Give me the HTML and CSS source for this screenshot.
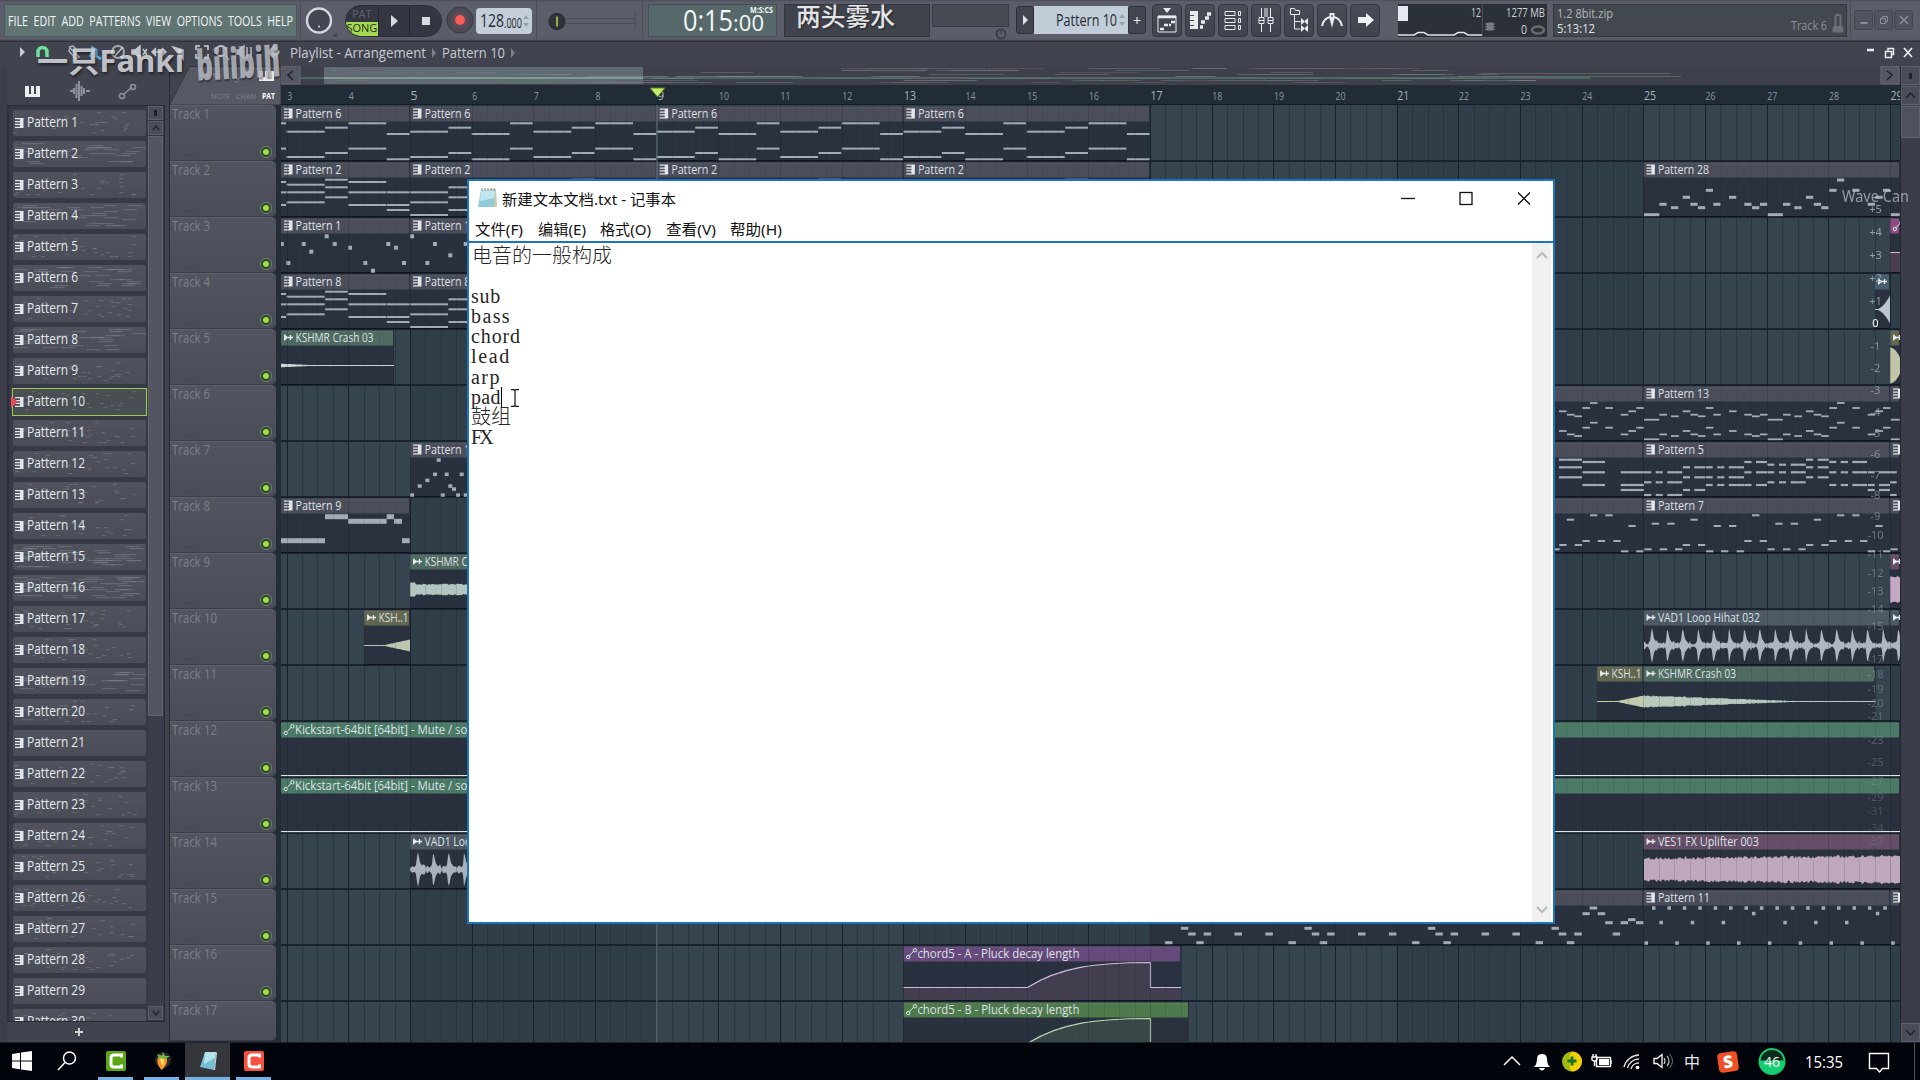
FILE: index.html
```html
<!DOCTYPE html>
<html lang="zh-CN">
<head>
<meta charset="utf-8">
<title>Playlist - Arrangement</title>
<link rel="stylesheet" href="styles.css">
</head>
<body>
<header class="toolbar">
  <div class="menu-panel"><span data-w="285">FILE&nbsp; EDIT&nbsp; ADD&nbsp; PATTERNS&nbsp; VIEW&nbsp; OPTIONS&nbsp; TOOLS&nbsp; HELP</span></div>
  <div class="cell knob-cell"><svg width="38" height="40"><circle cx="18" cy="19.500" r="12" fill="#434651" stroke="#d5d8df" stroke-width="2.4"/><circle cx="18" cy="25.500" r="1" fill="#ddd"/><path d="M36 31v5h-5z" fill="#454853"/></svg></div>
  <div class="transport">
    <div class="mode"><span class="pat">PAT</span><span class="song">SONG</span></div>
    <div class="tbtn"><svg width="12" height="12"><path d="M3 0l7 6-7 6z" fill="#d9dbe0"/></svg></div>
    <div class="tbtn"><svg width="8" height="8"><rect width="8" height="8" fill="#d9dbe0"/></svg></div>
  </div>
  <svg class="record" width="28" height="32"><circle cx="14" cy="16" r="13" fill="#4a4a55" stroke="#363841"/><circle cx="14" cy="16" r="9" fill="#5d4b55"/><circle cx="14" cy="16" r="5" fill="#fa5c56"/></svg>
  <div class="tempo"><span class="t-int" data-w="24">128</span><span class="t-dec" data-w="18">.000</span><svg width="7" height="14"><path d="M0 5l3-4 3 4zM0 9l3 4 3-4z" fill="#94a1ad"/></svg></div>
  <div class="cell slider"><svg width="106" height="40"><path d="M28 17.500h70v5H28M98 12v16" fill="none" stroke="#4c4f5a"/><circle cx="20" cy="20.500" r="8" fill="#30333b" stroke="#24262d"/><path d="M20 15.500v10" stroke="#b9d94f" stroke-width="1.500"/></svg></div>
  <div class="time-panel"><span class="t-big" data-w="50">0:15</span><span class="t-small" data-w="31">:00</span><em data-w="23">M:S:CS</em></div>
  <div class="news-panel"></div>
  <div class="side-panel"><div class="mini-panel"></div><svg width="12" height="12"><circle cx="6" cy="6" r="4.500" fill="none" stroke="#3c3f4a" stroke-width="2"/><path d="M6 6V2" stroke="#3c3f4a"/></svg></div>
  <div class="picker"><b><svg width="8" height="10"><path d="M2 0l5 5-5 5z" fill="#e0e2e6"/></svg></b><div class="pname"><span data-w="61">Pattern 10</span><svg width="6" height="14"><path d="M0 5l3-4 3 4zM0 9l3 4 3-4z" fill="#94a1ad"/></svg></div><b>+</b></div>
  <nav class="tools">
    <i><svg viewBox="0 0 30 32"><path d="M11 4h8l-4 5z" fill="#e8eaee"/><path d="M6 12h18v16H6z" fill="none" stroke="#e8eaee"/><path d="M6 13h18M8 25h4M12 21h4M17 21h2M19 18h4" stroke="#e8eaee" stroke-width="2.500"/></svg></i>
    <i><svg viewBox="0 0 30 32"><path d="M5 7h8v18H5v-3h4v-1H5v-4h4v-1H5v-4h4v-1H5z" fill="#e8eaee"/><path d="M15 23h3M16 18h4M20 14h4M22 10h4" stroke="#e8eaee" stroke-width="3.500"/></svg></i>
    <i><svg viewBox="0 0 30 32"><path d="M7 7.500h10v4H7zM7 14.500h10v4H7zM7 21.500h10v4H7zM20.500 7.500h2v4h-2zM20.500 14.500h2v4h-2zM20.500 21.500h2v4h-2z" fill="none" stroke="#e8eaee"/></svg></i>
    <i><svg viewBox="0 0 30 32"><path d="M10.500 4v9M14 4v9M10.500 20v8M19.500 4v9M16 4v9M19.500 20v8M8 13.500h5v6H8zM17 13.500h5v6h-5z" fill="none" stroke="#e8eaee"/><path d="M8 16.500h5M17 16.500h5" stroke="#e8eaee"/></svg></i>
    <i><svg viewBox="0 0 30 32"><path d="M6.500 10.500v-6h4l1 2h4v4zM10.500 11v14h6M10.500 17.500h6" fill="none" stroke="#e8eaee"/><path d="M17 14v7l4-3.500zM24 14v7l-4-3.500zM17 21v7l4-3.500zM24 21v7l-4-3.500z" fill="#e8eaee"/></svg></i>
    <i><svg viewBox="0 0 30 32"><path d="M5 22c1-5 4-8 8-9M25 22c-1-5-4-8-8-9" fill="none" stroke="#e8eaee" stroke-width="2"/><path d="M12.500 9h5v5l-2.500 10-2.500-10z" fill="#e8eaee"/><circle cx="15" cy="12" r="1" fill="#555965"/></svg></i>
    <i><svg viewBox="0 0 30 32"><path d="M8 13h8V9l8 7-8 7v-4H8z" fill="#f1f2f4"/></svg></i>
  </nav>
  <div class="cpu"><div class="cpu-l"><span data-w="10">12</span><svg width="85" height="34"><rect width="10" height="15" y="2" fill="#e5e9f0"/><path d="M0 31h16l4-2.500h6l4 2.500h26l4-2.500h6l4 2.500h14" fill="none" stroke="#dfe3e6" stroke-width="1.500"/></svg></div><div class="cpu-r"><span data-w="39">1277 MB</span><span class="zero" data-w="6">0</span><svg width="62" height="18"><path d="M3 2h6v7H3zM1 3h10M1 6h10M1 8.500h10" stroke="#777b82" fill="#777b82"/><ellipse cx="54" cy="9" rx="6" ry="3.500" fill="none" stroke="#666b72" stroke-width="2.500"/></svg></div></div>
  <div class="hint"><div><p data-w="56">1.2 8bit.zip</p><p class="bright" data-w="38">5:13:12</p></div><span class="trk" data-w="36">Track 6</span><svg width="12" height="20"><rect x="3.500" y="1" width="5" height="13" rx="2" fill="none" stroke="#6d7177" stroke-width="2"/><path d="M0 16h12M2 12l-1 6h10l-1-6" fill="#6d7177" stroke="#6d7177"/></svg></div>
  <div class="cell winctl"><i><svg width="10" height="10"><path d="M1.500 8h7" stroke="#8b8e98" stroke-width="2"/></svg></i><i><svg width="10" height="10"><path d="M1.500 3.500h5v5h-5zM3.500 3V1.500h5v5H7" fill="none" stroke="#8b8e98"/></svg></i><i><svg width="10" height="10"><path d="M1 1l8 8M9 1L1 9" stroke="#8b8e98" stroke-width="1.500"/></svg></i></div>
</header>

<main class="playlist">
  <div class="title-row">
    <svg class="title-icons" width="282" height="24"><path d="M20 6l5 5-5 5z" fill="#c9ccd2"/><path d="M38 16v-5a4.500 4.500 0 019 0v5" fill="none" stroke="#6be29c" stroke-width="3.500"/><path d="M70 7l9 9-3 2-7-8zM69 6l4-1 3 3" fill="none" stroke="#aeb3bc" stroke-width="1.500"/><path d="M91 6l5 3v6l5 3M94 8l-4 8" fill="none" stroke="#61a5df" stroke-width="3"/><circle cx="118" cy="11" r="6" fill="none" stroke="#a3a8b1" stroke-width="2"/><path d="M114 16l9-10M132 9h3l5-4v12l-5-4h-3zM143 8l4 6M147 8l-4 6M152 11h13M156 7l-4 4 4 4M162 7l4 4-4 4M173 6l10 3v9z" stroke="#c2c5cc" stroke-width="1.500" fill="#c2c5cc"/><path d="M196 9V5h4M204 5h4v4M208 13v4h-4M200 17h-4v-4" fill="none" stroke="#d1d4da" stroke-width="1.500"/><circle cx="221" cy="10" r="5" fill="none" stroke="#c2c5cc" stroke-width="2"/><path d="M225 14l4 5M236 9h3l5-4v12l-5-4h-3zM247 6v11M251 6v11M268 11l6-6v12zM279 11l-4-5v10z" fill="#b8bcc4" stroke="#b8bcc4" stroke-width="1.500"/></svg>
    <span class="crumb" data-w="136">Playlist - Arrangement</span><svg class="sep" width="16" height="12"><path d="M6 1l4 5-4 5z" fill="#7d808b"/></svg><span class="crumb" data-w="63">Pattern 10</span><svg class="sep" width="16" height="12"><path d="M6 1l4 5-4 5z" fill="#7d808b"/></svg>
    <svg class="title-ctl" width="50" height="20"><path d="M0 7h7" stroke="#e9ebef" stroke-width="2.500"/><path d="M18.500 8.500h6v6h-6zM21 8V5.500h5.500v6H25" fill="none" stroke="#e9ebef" stroke-width="1.500"/><path d="M37 5l8 9M45 5l-8 9" stroke="#e9ebef" stroke-width="1.700"/></svg>
  </div>
  <div class="work">
    <aside class="browser">
      <div class="tabs"><svg width="165" height="39"><path d="M25 20h4v8h2v-8h3v8h2v-8h4v11H25z" fill="#eceef1"/><path d="M70 25h3M74 22v6M76.500 18v14M79 15v20M81.500 20v10M84 22v6M86 25h4" stroke="#8d919b" stroke-width="2"/><path d="M123 29l9-8" stroke="#8d919b" stroke-width="1.500"/><circle cx="122" cy="30" r="2.500" fill="none" stroke="#8d919b" stroke-width="1.500"/><circle cx="133" cy="21" r="2.500" fill="none" stroke="#8d919b" stroke-width="1.500"/></svg></div>
      <div class="listbox"><ul id="patterns"></ul><div class="vscroll"><b class="dot"></b><b><svg width="12" height="12"><path d="M3 8l3-4 3 4" fill="none" stroke="#20232b" stroke-width="1.300"/></svg></b><div class="thumb"></div><div class="gutter"></div><b><svg width="12" height="12"><path d="M3 4l3 4 3-4" fill="none" stroke="#20232b" stroke-width="1.300"/></svg></b></div></div>
      <div class="add"><svg width="10" height="10"><path d="M5 1v8M1 5h8" stroke="#cbd5d4" stroke-width="2"/></svg></div>
    </aside>
    <section class="heads">
      <div class="corner"><svg width="111" height="39"><path d="M.5 37L19 1.500Q20 .5 21 .5H111V39H0z" fill="#565964" stroke="#323640"/><path d="M42 7l4 8 4-8z" fill="#777a85"/><path d="M67 14l9-8" stroke="#858994"/><circle cx="66" cy="14" r="2" fill="none" stroke="#858994"/><circle cx="77" cy="6" r="2" fill="none" stroke="#858994"/><path d="M89 5h4v6h2V5h3v6h2V5h4v10H89z" fill="#eee"/></svg><span class="note" data-w="19">NOTE</span><span class="chan" data-w="20">CHAN</span><span class="patb" data-w="13">PAT</span></div>
      <div id="tracks"></div>
    </section>
    <section class="timeline"><svg id="overview" width="1619" height="20"></svg><svg id="ruler" width="1619" height="19"></svg><svg id="grid" width="1619" height="937"></svg></section>
    <div class="rightbar"><b class="dot"></b><b><svg width="17" height="17"><path d="M4 11l4.500-5 4.500 5" fill="none" stroke="#20232b" stroke-width="1.400"/></svg></b><div class="rthumb"></div><div class="gutter"></div><b class="down"><svg width="17" height="17"><path d="M4 6l4.500 5L13 6" fill="none" stroke="#20232b" stroke-width="1.400"/></svg></b></div>
  </div>
</main>

<footer class="taskbar">
  <div class="tk"><svg width="20" height="20"><path d="M0 3l8-1.200V9.500H0zM9 1.600L20 0v9.500H9zM0 10.500h8v7.700L0 17zM9 10.500h11V20L9 18.400z" fill="#fff"/></svg></div>
  <div class="tk"><svg width="20" height="20"><circle cx="12.500" cy="7" r="6" fill="none" stroke="#fff" stroke-width="1.500"/><path d="M8 11.500L1 19" stroke="#fff" stroke-width="1.500"/></svg></div>
  <div class="tk run"><svg width="20" height="20"><rect width="20" height="20" rx="2" fill="#5aa616"/><path d="M15.500 6.500V4H8Q5 4 5 7v6q0 3 3 3h7.500v-2.500" fill="none" stroke="#fff" stroke-width="3"/></svg></div>
  <div class="tk run"><svg width="20" height="20"><circle cx="11" cy="9" r="8" fill="#272b2b"/><path d="M6 7q2-4 7-2 5 5-2 13-2 2-3-1-4-6-2-10z" fill="#f79827"/><path d="M8 8q1 5 3 7 2-5 0-8z" fill="#ffdc6b"/><path d="M5 3l5 2 1-4 2 4 5 0-5 3-6-1z" fill="#74b84a"/></svg></div>
  <div class="tk run active"><svg width="20" height="20"><path d="M7 1h11l-2 18-14-3z" fill="#76bfd2"/><path d="M7 1h11l-1 6-11 6z" fill="#b2e2ec"/><path d="M18 1l1 1-2 17-1 0z" fill="#d4dfe3"/></svg></div>
  <div class="tk run"><svg width="20" height="20"><rect width="20" height="20" rx="2" fill="#f9513f"/><path d="M15.500 6.500V4H8Q5 4 5 7v6q0 3 3 3h7.500v-2.500" fill="none" stroke="#fff" stroke-width="3"/></svg></div>
  <div class="tray">
    <svg width="30" height="38"><path d="M7 22l8-8 8 8" fill="none" stroke="#fff" stroke-width="1.500"/></svg>
    <svg width="30" height="38"><path d="M7 24q3-3 3-8 0-5 5-5t5 5q0 5 3 8zM12 25h6q-1 2.500-3 2.500T12 25z" fill="#fff"/></svg>
    <svg width="30" height="38"><circle cx="15" cy="18.500" r="10" fill="#a4b811"/><path d="M15 8.500a10 10 0 010 20c-4-5-4-15 0-20z" fill="#f4d000"/><path d="M15 13.500v9M10.500 18h9" stroke="#187424" stroke-width="3"/></svg>
    <svg width="30" height="38"><path d="M9.500 14.500h14v9h-14zM24 17v4M6 11v3M9 11v3M5 14h5v3q-2.500 2-5 0zM7.500 18v5" fill="none" stroke="#fff" stroke-width="1.400"/><path d="M12 16h10v6H12z" fill="#fff"/></svg>
    <svg width="30" height="38"><path d="M7 24A16 16 0 0122 12M10.500 25A12 12 0 0122 16M14 26a8 8 0 018-6" fill="none" stroke="#ddd" stroke-width="1.400"/><circle cx="20.500" cy="24.500" r="1.800" fill="#fff"/></svg>
    <svg width="30" height="38"><path d="M7 15.500h3l5-4v13l-5-4H7z" fill="none" stroke="#fff" stroke-width="1.300"/><path d="M17 15q2 3 0 6M20 13q4 5 0 10" fill="none" stroke="#ccc" stroke-width="1.200"/><path d="M22.500 11q6 7 0 14" fill="none" stroke="#777"/></svg>
    <span class="ime">中</span>
    <span class="sogou">S</span>
    <svg class="mem" width="32" height="38"><circle cx="16" cy="18.500" r="12.500" fill="#0c2a1d" stroke="#16cb6e" stroke-width="2"/><path d="M3 17.500h26a13 13 0 01-26 0z" fill="#16d070"/><text x="8" y="23.500" textLength="16" lengthAdjust="spacingAndGlyphs">46</text></svg>
    <span class="clock"><span data-w="38">15:35</span></span>
    <svg class="action" width="22" height="24"><path d="M1.500 3.500h19v15h-6l-3 3.500-3-3.500h-7z" fill="none" stroke="#fff" stroke-width="1.400"/></svg>
    <span class="edge"></span>
  </div>
</footer>

<section class="notepad">
  <div class="np-title"><svg width="22" height="22"><path d="M4 3l15-1 1 18-18 0z" fill="#d3c9a9"/><path d="M4 3h14l-1 17H1z" fill="#8fcbdc"/><path d="M4 3h14l-.6 8L3 14z" fill="#bfe5ee"/><path d="M5 1v3M8 1v3M11 1v3M14 1v3M17 1v3" stroke="#7d8b8e"/></svg><span data-w="174">新建文本文档.txt - 记事本</span>
    <svg class="np-ctl" width="142" height="36"><path d="M7 18.500h14" stroke="#111" stroke-width="1.300"/><rect x="66" y="12.500" width="12" height="12" fill="none" stroke="#111" stroke-width="1.300"/><path d="M124 12.500l12 12M136 12.500l-12 12" stroke="#111" stroke-width="1.300"/></svg></div>
  <div class="np-menu"><span data-w="48">文件(F)</span><span data-w="48">编辑(E)</span><span data-w="51">格式(O)</span><span data-w="50">查看(V)</span><span data-w="52">帮助(H)</span></div>
  <div class="np-body">
    <div class="np-text"><p>电音的一般构成</p><p>&nbsp;</p><p data-ls="30">sub</p><p data-ls="40">bass</p><p data-ls="50">chord</p><p data-ls="40">lead</p><p data-ls="30">arp</p><p><span class="pad" data-ls="30">pad</span><svg class="ibeam" width="8" height="18"><path d="M0 .7h3l1 1 1-1h3M4 1.500v15M0 17.300h3l1-1 1 1h3" fill="none" stroke="#111" stroke-width="1.200"/></svg></p><p>鼓组</p><p data-ls="20">FX</p></div>
    <div class="np-scroll"><svg width="12" height="8"><path d="M1 7l5-5 5 5" fill="none" stroke="#bbb" stroke-width="2"/></svg><svg width="12" height="8"><path d="M1 1l5 5 5-5" fill="none" stroke="#bbb" stroke-width="2"/></svg></div>
  </div>
</section>

<div class="mark mark-name"><span data-w="147">一只Fanki</span></div>
<div class="mark mark-site"><span data-w="86">bilibili</span></div>
<div class="mark mark-song"><span data-w="99">两头雾水</span></div>
<div class="mark mark-wave"><span data-w="67">Wave Can</span></div>
<svg class="mark db" id="db" width="40" height="700"></svg>
<script src="app.js"></script>
</body>
</html>
```

FILE: styles.css
```css
* { box-sizing: border-box; }
body { margin: 0; width: 1920px; height: 1080px; overflow: hidden; display: flex; flex-direction: column; background: #41444f; color: #e4e7ec; font-family: "Open Sans", "Noto Sans", "Noto Sans CJK SC", sans-serif; font-size: 13px; }
svg { display: block; flex: none; }
p { margin: 0; }
i, em { font-style: normal; }
[data-w] { display: inline-block; transform-origin: left center; white-space: nowrap; }

.toolbar { height: 42px; flex: none; display: flex; align-items: flex-start; padding: 4px 7px 0 4px; background: linear-gradient(#4a4d57 0, #5b5e6a 2px, #5b5d69 38px, #555864 40px, #30333c 41px); }
.menu-panel { width: 293px; height: 33px; margin-right: 3px; padding-left: 3px; background: #617474; border: 1px solid #4c5860; font-size: 15px; line-height: 30px; color: #f3f6f5; }
.cell { border-left: 1px solid #4a4d58; height: 38px; margin-top: -3px; }
.knob-cell { width: 45px; }
.transport { width: 97px; height: 32px; margin-top: 1px; display: flex; border-radius: 16px; overflow: hidden; background: #343741; border: 1px solid #2c2f37; }
.mode { width: 32px; display: flex; flex-direction: column; text-align: center; font-size: 11px; line-height: 15px; }
.pat { color: #60646d; height: 16px; }
.song { background: #a4db52; color: #1d2b15; height: 14px; line-height: 12px; }
.tbtn { width: 32px; display: flex; align-items: center; justify-content: center; border-left: 1px solid #24272e; }
.record { margin: 0 2px 0 4px; }
.tempo { width: 56px; height: 26px; margin: 4px 4px 0 0; border-radius: 4px; background: #c3ced8; color: #252b33; display: flex; align-items: center; padding-left: 4px; position: relative; }
.t-int { font-size: 18px; width: 24px; line-height: 22px; margin-top: -2px; }
.t-dec { font-size: 14px; width: 19px; padding-top: 2px; }
.slider { width: 107px; border-right: 1px solid #4a4d58; margin-right: 5px; }
.time-panel { width: 129px; height: 33px; margin-right: 7px; background: #566869; border: 1px solid #454f58; display: flex; position: relative; padding-left: 34px; color: #f4f8f7; }
.t-big { font-size: 30px; line-height: 29px; width: 50px; }
.t-small { font-size: 21px; line-height: 36px; width: 31px; height: 30px; }
.time-panel em { position: absolute; right: 3px; top: 0; width: 23px; font-size: 8px; font-weight: 700; line-height: 10px; }
.news-panel { width: 146px; height: 33px; margin-right: 2px; background: #40444d; border: 1px solid #33363f; }
.side-panel { width: 77px; margin-right: 7px; display: flex; flex-direction: column; align-items: flex-end; gap: 1px; }
.mini-panel { width: 77px; height: 23px; background: #474b54; border: 1px solid #383b44; }
.side-panel svg { margin-right: 2px; }
.picker { width: 130px; height: 28px; margin: 2px 6px 0 0; display: flex; }
.picker b { width: 18px; background: #42454f; border: 1px solid #2e3139; border-radius: 3px; display: flex; align-items: center; justify-content: center; font-weight: 400; font-size: 15px; }
.pname { width: 94px; background: #c1cdd8; color: #252b35; font-size: 16px; display: flex; align-items: center; gap: 2px; padding-left: 22px; }
.pname span { width: 61px; }
.tools { display: flex; gap: 3px; margin: 0 18px 0 0; }
.tools i { width: 30px; height: 33px; background: linear-gradient(#484c57, #3f434d); border: 1px solid #343740; border-radius: 4px; }
.tools svg { margin: -1px; width: 30px; height: 32px; }
.cpu { width: 149px; height: 33px; display: flex; margin-right: 6px; background: #2c3138; font-size: 13px; line-height: 17px; color: #ccd1d6; }
.cpu-l { width: 85px; position: relative; border-right: 1px solid #444952; }
.cpu-l span { position: absolute; left: 73px; top: 0; }
.cpu-r { display: flex; flex-direction: column; width: 64px; padding-left: 23px; position: relative; }
.cpu-r .zero { margin-left: 15px; line-height: 16px; }
.cpu-r svg { position: absolute; left: 1px; top: 17px; }
.hint { width: 294px; height: 33px; background: #42484e; border: 1px solid #353940; display: flex; align-items: flex-end; padding: 0 2px 2px 3px; font-size: 13px; color: #b0b6bb; }
.hint div { align-self: flex-start; flex: 1; display: flex; flex-direction: column; align-items: flex-start; }
.hint p { line-height: 16px; }
.hint .bright { color: #e3e6e8; line-height: 15px; }
.trk { width: 36px; color: #8b8f95; line-height: 14px; margin: 0 5px 2px 0; }
.winctl { margin-left: 3px; display: flex; padding: 9px 0 0 3px; gap: 1px; }
.winctl i { width: 19px; height: 20px; border: 1px solid #444751; border-radius: 3px; background: #50535e; display: flex; align-items: center; justify-content: center; }

.playlist { flex: 1; display: flex; flex-direction: column; background: #41444f; min-height: 0; }
.title-row { height: 24px; flex: none; display: flex; align-items: center; padding: 0 3px 3px 7px; }
.title-icons { margin-left: -7px; margin-right: 8px; }
.crumb { font-size: 14px; line-height: 18px; color: #c8cbd2; }
.crumb:nth-of-type(1) { width: 136px; }
.crumb:nth-of-type(2) { width: 63px; }
.title-ctl { margin-left: auto; }
.work { flex: 1; display: flex; min-height: 0; }
.browser { width: 170px; display: flex; flex-direction: column; border-right: 1px solid #282b34; border-left: 7px solid #3c3f49; flex: none; }
.tabs { height: 39px; flex: none; }
.tabs svg { margin-left: -7px; }
.listbox { height: 917px; flex: none; margin-right: 4px; display: flex; background: #363a45; border: 1px solid #272b34; border-left: 2px solid #2d3039; overflow: hidden; }
#patterns { margin: 0; padding: 4px 0 0 4px; list-style: none; width: 139px; display: flex; flex-direction: column; gap: 5px; height: 100%; overflow: hidden; }
#patterns li { width: 133px; height: 26px; flex: none; position: relative; background: linear-gradient(#50535e, #4a4d58); border-radius: 2px; display: flex; align-items: center; padding-left: 2px; }
#patterns li.sel { outline: 1.5px solid #a2cb54; outline-offset: 0; border-radius: 0; background: #494e53; }
#patterns li.sel::before { content: ""; position: absolute; left: -2px; border-left: 7px solid #e94a60; border-top: 6px solid transparent; border-bottom: 6px solid transparent; z-index: 2; }
#patterns .notes { position: absolute; left: 0; top: 0; }
#patterns .pi { margin-right: 3px; position: relative; }
#patterns span { z-index: 1; font-size: 14px; line-height: 20px; padding-bottom: 2px; color: #e4eaed; }
.vscroll { width: 15px; display: flex; flex-direction: column; background: #30343e; }
.vscroll b, .rightbar b { height: 14px; background: #4a4d58; border: 1px solid #5d606c; flex: none; margin-bottom: 1px; display: flex; align-items: center; justify-content: center; }
.dot::after { content: ""; display: block; width: 3px; height: 6px; background: #1e2129; }
.thumb { height: 600px; background: #535661; border: 1px solid #636671; flex: none; }
.vscroll .thumb { height: 580px; }
.gutter { flex: 1; background: repeating-conic-gradient(#383b47 0 25%, #3d404c 0 50%) 0 0 / 2px 2px; }
.add { flex: 1; padding: 5px 0 0 67px; }

.heads { width: 111px; flex: none; background: #252d37; }
.corner { height: 39px; position: relative; background: #41444f; }
.corner span { position: absolute; top: 24px; font-size: 8px; line-height: 12px; color: #80838d; }
.corner .note { left: 41px; }
.corner .chan { left: 66px; }
.corner .patb { left: 92px; color: #fff; font-weight: 700; }
.track { height: 56px; width: 106px; background: linear-gradient(#52555f, #4a4d57); border-top: 1px solid #5d606a; border-bottom: 1px solid #3b3e48; border-radius: 0 5px 5px 0; color: #7b7f88; font-size: 14px; display: flex; flex-direction: column; justify-content: space-between; padding-left: 2px; }
.track:last-child { height: 40px; }
.track:last-child .led-row { display: none; }
.track span { line-height: 15px; width: 39px; }
.led-row { display: flex; justify-content: space-between; align-items: center; height: 16px; padding: 0 5px 0 11px; color: #343842; font-size: 10px; letter-spacing: 1px; }
.led-row b { width: 10px; height: 10px; border-radius: 50%; background: #a0e04a; border: 2px solid #2c4023; outline: 1px solid #6f8c73; }

.timeline { width: 1619px; flex: none; background: #2f3d48; }
.timeline text { font-family: "Open Sans", sans-serif; font-size: 13px; }
#ruler text { font-size: 11px; fill: #8b98a1; }
#ruler .strong { font-size: 12.5px; fill: #a9b5bc; }
.rightbar { width: 20px; display: flex; flex-direction: column; border-left: 1px solid #222831; }
.rightbar b { height: 19px; }
.rthumb { height: 32px; background: #4f525e; border: 1px solid #606370; flex: none; }
.rightbar .down { margin: 0; }

.taskbar { height: 38px; flex: none; background: #02040b; display: flex; border-top: 1px solid #1c232b; position: relative; padding-left: 4px; }
.tk { width: 36px; display: flex; align-items: center; justify-content: center; border-bottom: 3px solid transparent; padding-top: 1px; }
.tk:nth-child(2) { margin-left: 9px; width: 36px; }
.tk:nth-child(3) { margin-left: 13px; width: 35px; }
.tk:nth-child(4) { margin-left: 11px; width: 35px; }
.tk:nth-child(5) { margin-left: 6px; width: 45px; }
.tk:nth-child(6) { margin-left: 6px; width: 35px; }
.run { border-color: #76b0e4; }
.active { background: #35353c; }
.tray { margin-left: auto; display: flex; align-items: center; }
.ime { width: 30px; text-align: center; font-size: 16px; line-height: 30px; }
.sogou { width: 20px; height: 20px; margin: 0 9px 0 11px; border-radius: 4px; background: #ed5125; color: #fff; font-weight: 800; font-size: 17px; line-height: 20px; text-align: center; transform: rotate(-8deg); }
.mem { margin-left: 9px; }
.mem text { fill: #fff; font: 15px "Open Sans", sans-serif; }
.clock { margin: 0 25px 0 17px; font-size: 16px; width: 38px; color: #fff; }
.action { margin-right: 24px; }
.edge { width: 1px; height: 38px; background: #555; margin-right: 5px; }

.notepad { position: absolute; left: 467px; top: 179px; width: 1088px; height: 745px; background: #fff; border: 2px solid #1b75bd; color: #111; display: flex; flex-direction: column; font-family: "Noto Sans", "Noto Sans CJK SC", sans-serif; }
.np-title { height: 34px; display: flex; align-items: center; padding-left: 8px; gap: 3px; font-size: 15px; }
.np-title span { width: 174px; }
.np-ctl { margin-left: auto; margin-right: 17px; }
.np-menu { height: 28px; flex: none; display: flex; font-size: 15px; line-height: 28px; padding-left: 6px; gap: 15px; border-bottom: 2px solid #1b75bd; }
.np-menu span:nth-child(1), .np-menu span:nth-child(2) { width: 47.500px; }
.np-menu span:nth-child(3) { width: 51px; }
.np-menu span:nth-child(4) { width: 49px; }
.np-body { flex: 1; display: flex; justify-content: space-between; min-height: 0; }
.np-text { padding: 3px 0 0 2px; font: 20px/20.100px "Liberation Serif", "Noto Sans CJK SC", serif; font-weight: 300; color: #262626; }
.np-text p { height: 20.100px; display: flex; }
.np-text p:first-child { padding-left: 1px; }
.pad { border-right: 1px solid #000; width: 31px; }
.ibeam { margin: 2px 0 0 9px; }
.np-scroll { width: 19px; background: #f0f0f0; display: flex; flex-direction: column; justify-content: space-between; align-items: center; padding: 8px 0; margin-right: 2px; }

.mark { position: absolute; white-space: nowrap; pointer-events: none; }
.mark-name { left: 37px; top: 39px; font: 700 30px/44px "Noto Sans", "Noto Sans CJK SC", sans-serif; color: rgba(218,220,225,.85); text-shadow: 1px 2px 3px rgba(0,0,0,.5); }
.mark-site { left: 196px; top: 39px; font: 800 42px/44px "Open Sans", sans-serif; color: rgba(195,198,205,.8); text-shadow: 1px 2px 2px rgba(0,0,0,.4); transform: rotate(-3deg); }
.mark-song { left: 796px; top: -3px; font: 500 25px/36px "Noto Sans CJK SC", sans-serif; color: #e2e4e7; text-shadow: 1px 1px 2px #222; }
.mark-wave { left: 1842px; top: 184px; font: 16px/24px "Noto Sans", sans-serif; color: rgba(190,198,207,.7); }
.db { left: 1860px; top: 195px; }
.db text { font: 11px "Noto Sans", sans-serif; fill: #a4adb6; text-anchor: middle; }
```

FILE: app.js
```js
const BAR = 61.67, LEFT = 281, TOP = 105, ROW = 56;
const barX = n => 410 + (n - 5) * BAR - LEFT;
const byId = id => document.getElementById(id);
let seed = 7;
const rnd = () => (seed = (seed * 16807) % 2147483647) / 2147483647;
const rect = (x, y, w, h, fill, extra = '') => `<rect x="${x.toFixed(1)}" y="${y.toFixed(1)}" width="${w.toFixed(1)}" height="${h}" fill="${fill}" ${extra}/>`;
const PIANO = 'M5 0h3.500v10H5zM0 0h6v1.200H0zM0 2.900h6v1.300H0zM0 5.800h6v1.300H0zM0 8.800h6V10H0z';

/* pattern list */
let html = '';
for (let i = 1; i <= 30; i++) {
  let n = '';
  const long = [2, 4, 6, 8, 15, 16, 19].includes(i), rows = i === 15 || i === 16 ? 7 : 4;
  for (let k = 0; k < rows * 7; k++) {
    if (i === 21 || i === 29) break;
    n += rect(rnd() * 120, 2 + Math.floor(rnd() * 11) * 2, long ? 14 : 4, 1.2, '#7b7f89', 'opacity=".5"');
  }
  html += `<li class="${i === 10 ? 'sel' : ''}"><svg class="notes" width="133" height="26">${n}</svg><svg class="pi" width="8.500" height="10"><path d="${PIANO}" fill="#dfe5e8"/></svg><span data-w="${i < 10 ? 51 : 58}">Pattern ${i}</span></li>`;
}
byId('patterns').innerHTML = html;

/* track headers */
html = '';
for (let i = 1; i <= 17; i++) html += `<div class="track"><span data-w="${i < 10 ? 38 : 45}">Track ${i}</span><div class="led-row">...<b></b></div></div>`;
byId('tracks').innerHTML = html;

/* overview strip */
let o = rect(0, 0, 1619, 20, '#3e414c') + rect(0, 19, 1619, 1, '#262b34') + rect(43, 1, 319, 17, '#5f6a73');
o += rect(19, 11, 1290, 2, '#4b6960') + rect(43, 11, 319, 2, '#7d9d94');
for (let k = 0; k < 90; k++) {
  const x = 45 + rnd() * 1200;
  o += rect(x, 2 + Math.floor(rnd() * 8) * 2, 20 + rnd() * 70, 1, ['#7e8791', '#5d7c6c', '#6e5663', '#697078'][k % 4], 'opacity=".6"');
}
o += rect(1200, 7, 190, 1, '#58605f') + rect(1260, 10, 140, 1, '#506a60');
o += rect(0, 0, 19, 18, '#555863', 'stroke="#686b76"') + rect(1600, 0, 18, 18, '#555863', 'stroke="#686b76"');
o += '<path d="M12 5l-5 4 5 5M1606 5l5 4-5 5" fill="none" stroke="#20232b" stroke-width="1.500"/>';
byId('overview').innerHTML = o;

/* ruler */
let r = rect(0, 0, 1619, 19, '#222c37') + rect(0, 18, 1619, 1, '#141b24');
for (let b = 3; b <= 29; b++) {
  const w = b < 10 ? 6 : 11;
  r += `<text x="${(barX(b) + .5).toFixed(1)}" y="14" textLength="${b % 4 === 1 ? w + 1 : w - 1}" lengthAdjust="spacingAndGlyphs" class="${b % 4 === 1 ? 'strong' : ''}">${b}</text>`;
}
r += '<path d="M369 2h15l-7.500 9z" fill="#c3ee67" stroke="#5a7a28"/>';
byId('ruler').innerHTML = r;

/* grid background */
let g = '';
for (let b = 1; b < 30; b += 4) g += rect(barX(b), 0, 4 * BAR, 937, ((b - 1) / 4) % 2 ? '#2f3e49' : '#35444f');
const lines = () => {
  let s = '';
  for (let q = 0; q < 27 * 4; q++) {
    const x = Math.round(barX(3 + q / 4));
    s += rect(x, 0, 1, 937, q % 4 ? '#24333e' : '#17232f', q % 4 ? 'opacity=".7"' : '');
  }
  return s;
};
g += lines();
for (let t = 1; t < 17; t++) g += rect(0, t * ROW - 1, 1619, 2, '#18232e');

/* clips: track, left, right, label, label width, kind, header colour */
const icons = {
  p: `<path d="${PIANO}" fill="#e2e5ea"/>`,
  w: '<path d="M.7 2v6M1 5h8M6.500 2.500v5" stroke="#e8ecee" stroke-width="1.300"/><path d="M1 2.500L4.500 5 1 7.500z" fill="#e8ecee"/>',
  a: '<path d="M2.500 7.500l5-5" stroke="#dff0e5"/><circle cx="1.800" cy="8.500" r="1.700" fill="none" stroke="#dff0e5"/><circle cx="8.500" cy="1.800" r="1.700" fill="none" stroke="#dff0e5"/>'
};
const PAT = '#4b4e5a', GRN = '#4f6a60', YEL = '#62674f', SLT = '#4e5966', AUT = '#4a7a66', PNK = '#654f68';
let id = 0;
function clip(t, x0, x1, label, lw, kind, col) {
  x0 -= LEFT; x1 -= LEFT;
  const y = (t - 1) * ROW, w = x1 - x0, tx = kind === 'a' ? 14 : 14.5;
  id++;
  g += rect(x0, y + 1, w, 55, '#292f3c', 'opacity=".86"') + rect(x0, y + 55, w, 1, '#0f161f');
  g += rect(x0, y + 1.5, w - 1, 15, col, 'rx="1"') + rect(x0, y + 1.5, w - 1, 1, '#fff', 'opacity=".09"');
  g += `<clipPath id="c${id}"><rect x="${x0}" y="${y}" width="${w}" height="17"/></clipPath><g clip-path="url(#c${id})"><g transform="translate(${x0 + 3} ${y + 3.5})">${icons[kind]}</g>`;
  if (label) g += `<text x="${x0 + tx}" y="${y + 12.5}" textLength="${lw}" lengthAdjust="spacingAndGlyphs" fill="#dfe3e9">${label}</text>`;
  g += '</g>';
}
const note = (x, y, w, h = 2.5) => { g += rect(x - LEFT, y - TOP - h / 2, w, h, '#a3abb8'); };
const B5 = 410, B9 = 656.7, B13 = 903.4, B17 = 1150, B25 = 1643.4, B29 = 1890, END = 1900;

for (const [t, n] of [[1, 6], [2, 2]]) {
  clip(t, 281, B5, 'Pattern ' + n, 46, 'p', PAT);
  for (const b of [B5, B9, B13]) clip(t, b, b + 246.7, 'Pattern ' + n, 46, 'p', PAT);
}
clip(3, 281, B5, 'Pattern 1', 46, 'p', PAT); clip(3, B5, B9, 'Pattern 1', 46, 'p', PAT);
clip(4, 281, B5, 'Pattern 8', 46, 'p', PAT); clip(4, B5, B9, 'Pattern 8', 46, 'p', PAT);

const seg = [0, 38.5, 61.7, 100, 123.3, 161.8, 185, 223.5, 246.7];
const mel = [26.7, 22.7, 29, 18.3, 26.7, 22.7, 18.3, 29];
const chords = [[31.3, 41.3, 54], [26.3, 36.3, 49], [21, 31.3, 44], [21, 31.3, 44], [23.7, 31.3, 41.3], [18.7, 26.3, 36.3], [21, 31.3, 44], [31.3, 44, 49]];
for (const base of [B5 - 246.7, B5, B9, B13]) for (let i = 0; i < 8; i++) {
  const a = Math.max(281, base + seg[i]), z = base + seg[i + 1] - .5;
  if (z <= 281) continue;
  note(a, TOP + mel[i], z - a, 2); note(a, TOP + mel[i] + 25.3, z - a, 2);
  for (const c of chords[i]) { note(a, TOP + ROW + c, z - a, 2); if (base < B9) note(a, TOP + 3 * ROW + c, z - a, 2); }
}
for (const [x, y] of [[845,432],[865,489],[911,432],[934,455],[980,409],[1004,432],[1050,443],[1096,489],[1119,512],[1165,432],[1188,443],[1212,489],[1236,409],[1282,489],[1305,432],[1351,466],[1397,432]]) note(x / 3 - 2, 100 + y / 3, 4, 4);

clip(7, B5, B9, 'Pattern 1', 46, 'p', PAT);
for (const [x, y] of [[1316,1080],[1305,1123],[1340,1123],[1385,1123],[1282,1141],[1259,1158],[1351,1158],[1362,1167],[1236,1185],[1328,1185],[1374,1185],[1397,1185]]) note(x / 3 - 2, 100 + y / 3, 4, 3.5);

clip(8, 281, B5, 'Pattern 9', 46, 'p', PAT);
for (const [a, z, y] of [[843,975,182],[975,1044,110],[1044,1160,124],[1160,1182,110],[1182,1206,124],[1206,1229,182]]) note(a / 3, 480 + y / 3, (z - a) / 3, 5);

function wave(t, x0, x1, col, amp) {
  const cy = (t - 1) * ROW + 36.5;
  let up = '', dn = '';
  for (let x = x0; x <= x1; x += 1) {
    const a = Math.max(.5, amp(x - x0, (x - x0) / (x1 - x0)));
    up += ` L${x - LEFT} ${(cy - a).toFixed(1)}`; dn = ` L${x - LEFT} ${(cy + a).toFixed(1)}` + dn;
  }
  g += `<path d="M${x0 - LEFT} ${cy}${up}${dn}z" fill="${col}"/>`;
}
const hihat = x => { const p = x % 15.4; return p < 6 ? 1 + rnd() * 3 : p < 7 ? 5 : p < 10 ? 17.5 - Math.abs(p - 8) * 5 : p < 13 ? 7 - (p - 10) * 1.5 : 1.5 + rnd() * 4; };

clip(5, 281, 394, 'KSHMR Crash 03', 78, 'w', GRN);
wave(5, 281, 394, '#c7d5d3', (x, p) => 1.8 - p * 5);
clip(9, B5, B9, 'KSHMR Crash 03', 78, 'w', GRN);
wave(9, B5, 560, '#b3c5c1', x => x < 6 ? 7 : 4.500 + rnd() * 1.500);
clip(10, 364, B5, 'KSH..1', 30, 'w', YEL);
wave(10, 364, B5, '#bcc7ad', (x, p) => (p - .4) * 10);
for (const t of [12, 13]) {
  clip(t, 281, END, 'Kickstart-64bit [64bit] - Mute / solo', 182, 'a', AUT);
  g += rect(0, (t - 1) * ROW + 54, 1619, 1.2, '#dbe9e5');
}
clip(14, B5, B9, 'VAD1 Loop Hihat 032', 102, 'w', SLT);
wave(14, B5, 520, '#a9b2bf', hihat);

/* right side clips */
clip(2, B25, END, 'Pattern 28', 51, 'p', PAT);
for (const [t, l] of [[6, 13], [7, 5], [8, 7]]) {
  clip(t, B25 - 246.7, B25, '', 0, 'p', PAT);
  clip(t, B25, B29, 'Pattern ' + l, l > 9 ? 51 : 46, 'p', PAT);
  clip(t, B29, END, '', 0, 'p', PAT);
}
const riff = [[312,344,46],[358,313],[393,323],[428,292],[451,313],[474,323],[497,271],[520,313],[567,292],[613,313],[636,323],[660,313],[683,344,46],[729,313],[763,323],[798,292],[821,313],[844,323],[868,271],[891,240],[937,271],[983,313],[1006,292],[1029,271],[1052,344,27]];
for (const [x, y, w = 22] of riff) note(1540 + x / 3, 100 + y / 3, w / 3, 3);
const lead = [[57,292],[81,313],[103,323],[127,271],[150,240],[196,271],[242,313],[265,292],[289,271]];
for (const [x, y, w = 23] of [...lead, ...riff]) for (const d of [0, 59]) note(1540 + x / 3, 100 + (959 - (344 - y) * .48 + d) / 3, w / 3, 1.8);
const stab = [[57,126,1079,1102,1132],[127,195,1086,1117,1155],[242,312,1117,1155,1170],[312,334,1117,1147,1185],[347,368,1117,1147,1185],[382,427,1117,1147,1185],[429,450,1102,1132,1170],[463,496,1102,1132,1170],[497,518,1102,1132,1155],[532,553,1102,1132,1155],[566,612,1102,1132,1155],[613,635,1086,1117,1155],[648,681,1086,1117,1155],[682,703,1094,1117,1147],[717,738,1094,1117,1147],[752,797,1094,1117,1147],[798,820,1079,1102,1132],[833,867,1079,1102,1132],[868,889,1086,1117,1155],[902,924,1086,1117,1155],[937,981,1086,1117,1155],[983,1004,1117,1155,1170],[1017,1050,1117,1155,1170],[1050,1070,1117,1147,1185]];
for (const [a, z, ...ys] of stab) for (const y of ys) note(1540 + a / 3, 100 + y / 3, (z - a) / 3, 2.2);
const arp = {89:[91,462,832],76:[161,207,647,902,948],108:[276,532,578,1017],101:[346,393,717,763],178:[48,324,370,416,693,740,786,1062],165:[69,115,439,485,809,855],153:[138,184,231,624,670,879,925,971],184:[254,300,509,554,601,994,1040]};
for (const y in arp) for (const x of arp[y]) note(1540 + (x - 11) / 3, 490 + y / 3, 7.4, 2);

clip(3, B29, END, '', 0, 'a', '#8d4b80');
g += rect(B29 - LEFT, 147, 10, 1, '#d5b8cf') + rect(B29 - LEFT, 148, 10, 19, '#4a3e50');
clip(4, 1875, B29, '', 0, 'w', '#46606b');
wave(4, 1875, 1890, '#bac5cf', (x, p) => p * p * 14);
clip(5, B29, END, '', 0, 'w', YEL);
wave(5, 1890, 1900, '#c3c5a8', (x, p) => 18 - p * p * 10);
clip(9, B29, END, '', 0, 'w', PNK);
wave(9, 1890, 1900, '#c5a9c4', () => 12 + rnd() * 2);
clip(10, B25, B29, 'VAD1 Loop Hihat 032', 102, 'w', SLT);
clip(10, B29, END, '', 0, 'w', SLT);
wave(10, 1644, 1900, '#adb6c3', hihat);
clip(11, 1597, B25, 'KSH..1', 30, 'w', YEL);
clip(11, B25, 1875, 'KSHMR Crash 03', 78, 'w', GRN);
wave(11, 1597, 1645, '#c3cbaf', (x, p) => (p - .38) * 10);
wave(11, 1645, 1875, '#b9c9bd', (x, p) => (1 - p * 1.5) * 5 + rnd() * 1.5 * (1 - p));
clip(14, B25, END, 'VES1 FX Uplifter 003', 101, 'w', PNK);
wave(14, 1644, 1900, '#bfa8bf', (x, p) => 9.500 + p * 2.500 + rnd() * 3);

clip(15, B17, B25, '', 0, 'p', PAT);
clip(15, B25, B29, 'Pattern 11', 52, 'p', PAT);
clip(15, B29, END, '', 0, 'p', PAT);
for (let k = 0; k < 4; k++) {
  for (const [x, y] of [[58,188],[90,145],[105,162],[121,188],[136,162],[198,162],[260,162]]) {
    if (k === 3 && x > 140) continue;
    note(1140 + (x + k * 248.3) / 2.01 - 4, 880 + y / 3, 7.5, 3);
  }
}
for (const [x, y] of [[897,101],[912,84],[928,101],[943,128],[958,162],[974,128],[989,119],[1005,128]]) note(1140 + x / 2.01 - 4, 880 + y / 3, 7.5, 3);
for (let k = 0; k < 16; k++) note(1652 + k * 15.42, 908, 3.5, 3.5);
for (const x of [1233, 1482]) note(1138.500 + x / 2.01, 913.5, 3.5, 3.5);
for (const x of [1047, 1110, 1172, 1296, 1358, 1420]) note(1138.500 + x / 2.01, 922.500, 3.5, 3.5);
for (let k = 0; k < 9; k++) note(1644.500 + k * 30.84, 943, 3.5, 3.5);

function automation(t, x1, ch, head, stroke, fill) {
  clip(t, B13, x1, `chord5 - ${ch} - Pluck decay length`, 162, 'a', head);
  const y = (t - 1) * ROW, a = B13 - LEFT, m = 1027.5 - LEFT, e = 1150.5 - LEFT, z = x1 - LEFT;
  const d = `M${a} ${y + 42.5}H${m}C${m + 32} ${y + 22} ${m + 68} ${y + 17.5} ${e} ${y + 17.5}V${y + 42.5}H${z}`;
  g += `<path d="${d}V${y + 55}H${a}z" fill="${fill}" opacity=".5"/><path d="${d}" fill="none" stroke="${stroke}" stroke-width="1.200"/>`;
}
automation(16, 1181, 'A', '#654a7b', '#cdbddd', '#5b4b62');
automation(17, 1189, 'B', '#4f7a4c', '#bcd9b9', '#49604f');

g += `<g opacity=".22">${lines()}</g>` + rect(375.5, 0, 1, 937, '#8095a0', 'opacity=".75"');
byId('grid').innerHTML = g;

/* level scale */
const levels = {'+5':209,'+4':232,'+3':255,'+2':278,'+1':301,'0':323,'-1':346,'-2':368,'-3':390,'-4':412,'-5':433,'-6':454,'-7':475,'-8':495,'-9':516,'-10':535,'-11':554,'-12':573,'-13':591,'-14':609,'-15':626,'-17':659,'-18':674,'-19':689,'-20':703,'-21':716,'-23':740,'-25':762,'-27':781,'-29':797,'-31':811,'-34':828,'-37':841};
byId('db').innerHTML = Object.entries(levels).map(([k, y]) => `<text x="15.5" y="${y - 195 + 4}" opacity="${k === '0' ? 1 : Math.max(.15, .9 - (y - 209) / 950)}" ${k === '0' ? 'style="fill:#fff"' : ''}>${k}</text>`).join('');

/* condense labels to their column widths */
document.querySelectorAll('[data-w]').forEach(el => {
  const range = document.createRange();
  range.selectNodeContents(el);
  const w = range.getBoundingClientRect().width;
  if (w) el.style.transform = `scaleX(${(el.dataset.w / w).toFixed(4)})`;
});
document.querySelectorAll('[data-ls]').forEach(el => {
  const range = document.createRange();
  range.selectNodeContents(el);
  el.style.letterSpacing = ((el.dataset.ls - range.getBoundingClientRect().width) / el.textContent.trim().length).toFixed(2) + 'px';
});
```
